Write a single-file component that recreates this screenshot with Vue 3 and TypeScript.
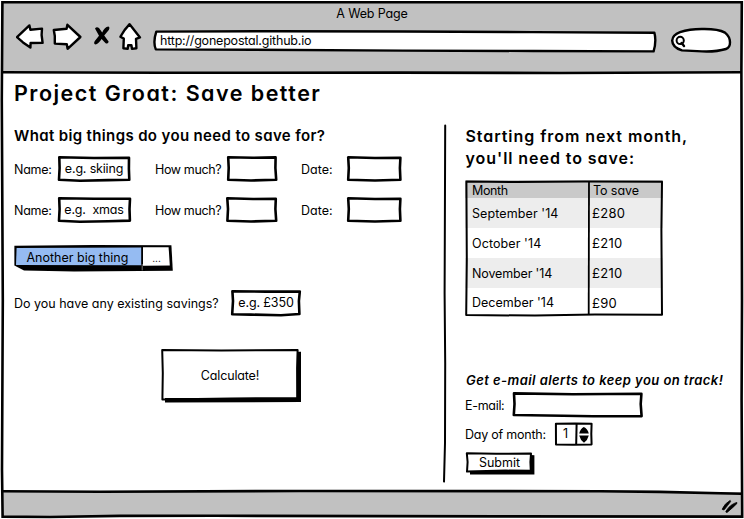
<script setup lang="ts">
interface Goal {
  placeholder: string
  nameShape: string
  amountShape: string
}

interface Saving {
  month: string
  amount: string
  tone: string
}

const goals: Goal[] = [
  {
    placeholder: 'e.g. skiing',
    nameShape: 'M1.3 1.3 L36 2 L71 1.7 L70.9 13 L71.3 23.8 L50 24.1 L22 24.7 L1 23.8 L1.6 12 Z',
    amountShape: 'M1.2 1.3 L26 1.8 L48.6 1.4 L48.4 12 L49.2 23.8 L24 24.5 L1.2 23.7 L1.7 12 Z',
  },
  {
    placeholder: 'e.g.  xmas',
    nameShape: 'M1.2 1.3 L36 1.8 L72 1.8 L71.5 12 L71.9 23.6 L50 24.2 L22 24.7 L1 23.8 L1.6 12 Z',
    amountShape: 'M0.3 1.3 L26 2 L48.8 1.8 L48.4 12 L49.2 23.8 L24 24.5 L0.4 23.7 L1 12 Z',
  },
]

const savings: Saving[] = [
  { month: "September '14", amount: '£280', tone: 'wide' },
  { month: "October '14", amount: '£210', tone: 'wide' },
  { month: "November '14", amount: '£210', tone: 'snug' },
  { month: "December '14", amount: '£90', tone: 'open' },
]
</script>

<template>
  <div class="browser">
    <header class="chrome">
      <div class="page-title">A Web Page</div>
      <div class="toolbar">
        <svg class="nav" width="126" height="30" viewBox="0 0 126 30">
          <path class="icon" d="M1 15.2 L13.4 3.4 L14.4 7.8 L26 6.6 L25.6 13 L26.6 20.8 L14.6 21 L14.4 25.6 L7 20.4 Z" />
          <path class="icon" d="M37.8 8 L50.6 6.8 L51.4 2.8 L64.4 15 L51.6 26.8 L50.8 22.2 L38.8 21.6 L38.8 14 Z" />
          <path class="cross" d="M79 6.6 Q80.6 4 83 6 L86.2 10.6 Q88.6 5 92.4 4.6 Q94.2 5.4 92.8 8 L88.2 13.6 L92.6 19.4 Q92.4 22.4 89.6 21.2 L85.6 17 Q82.6 21.8 79.4 22.6 Q77.2 21.6 78.8 19 L83 13.8 Z" />
          <path class="icon" d="M113.6 2.2 Q108 8 104.4 14.8 L107.8 16.6 L107.4 26.2 L111.7 26.9 L112.2 23.2 L115.4 23.2 L116 26.9 L120.4 26.2 L120 16.8 L124 15.4 Z" />
        </svg>
        <div class="address">
          <svg class="outline" viewBox="0 0 504 24">
            <path class="fill" d="M3.3 2.6 L120 2.2 L250 2.5 L380 3.1 L501.4 3.8 Q503.6 12 500.6 22.4 L380 22 L250 21.6 L100 20.8 L2.8 20.4 Q-0.2 13 3.3 2.6 Z" />
          </svg>
          <span class="url">http://gonepostal.github.io</span>
        </div>
        <svg class="search" width="62" height="28" viewBox="0 0 62 28">
          <path class="icon" d="M10 5.2 Q20 1.8 33 2 Q48 1.8 55 5.6 Q60 9.6 60 15.6 Q60 20.8 56 22 Q46 25 32 24.4 L12 23.4 Q2.4 20.4 2.2 13.6 Q2.6 8 10 5.2 Z" />
          <circle class="lens" cx="10.2" cy="13.4" r="3.6" />
          <path class="handle" d="M11.6 16 L14 19" />
        </svg>
      </div>
    </header>

    <main class="page">
      <h1>Project Groat: Save better</h1>
      <div class="columns">
        <section class="planner">
          <h2>What big things do you need to save for?</h2>
          <div v-for="goal in goals" :key="goal.placeholder" class="goal">
            <span class="label name-label">Name:</span>
            <div class="field name-field">
              <svg class="outline" viewBox="0 0 73 26"><path :d="goal.nameShape" /></svg>
              <span class="value">{{ goal.placeholder }}</span>
            </div>
            <span class="label amount-label">How much?</span>
            <div class="field amount-field">
              <svg class="outline" viewBox="0 0 51 26"><path :d="goal.amountShape" /></svg>
            </div>
            <span class="label date-label">Date:</span>
            <div class="field">
              <svg class="outline" viewBox="0 0 56 26">
                <path d="M1.2 1.3 L28 2 L53.4 1.7 L52.9 12 L53.4 23.8 L28 24.5 L1.2 23.7 L1.8 12 Z" />
              </svg>
            </div>
          </div>

          <div class="split">
            <svg class="outline" viewBox="0 0 160 28">
              <path class="solid" d="M0.4 0.8 L80 0 L157.4 0.2 L158.8 25.8 L60 26.4 L10 25.6 L0.4 20.6 Z" />
              <path class="blue" d="M2.6 3 L127.2 2.4 L127.2 20.2 L2 20 Z" />
              <path class="white" d="M129 2.2 L154.6 2.2 L155.8 20.4 L129 20.8 Z" />
              <path class="hair" d="M128.2 19 V25.4" />
            </svg>
            <span class="split-label">Another big thing</span>
            <span class="split-more">...</span>
          </div>

          <div class="existing">
            <span class="label existing-label">Do you have any existing savings?</span>
            <div class="field">
              <svg class="outline" viewBox="0 0 71 28">
                <path d="M1.4 2.2 L35 2.6 L68.8 2.6 L67.9 12 L68.4 25 L50 26.2 L20 25.6 L1.2 25.2 L2 12 Z" />
              </svg>
              <span class="value pounds">e.g. £350</span>
            </div>
          </div>

          <div class="calculate">
            <svg class="outline" viewBox="0 0 141 55">
              <path class="solid" d="M4 50 L136 50 L136 3.8 L140 3.8 L140 54 L4 54.4 Z" />
              <path class="thin" d="M1.2 2 L60 2.5 L136.6 2 L136.1 20 L136.2 50 L70 50.4 L1.4 51.4 L1.8 25 Z" />
            </svg>
            <span>Calculate!</span>
          </div>
        </section>

        <svg class="divider" width="6" height="360" viewBox="0 0 6 360">
          <path d="M3.2 2.4 L2.8 120 L2.6 170 L3.2 240 L3 320 L2 358.6" />
        </svg>

        <aside class="summary">
          <h2 class="large">Starting from next month, you'll need to save:</h2>
          <div class="table">
            <div class="row head">
              <span class="month">Month</span>
              <span class="save">To save</span>
            </div>
            <div v-for="item in savings" :key="item.month" class="row">
              <span :class="item.tone">{{ item.month }}</span>
              <span class="amount">{{ item.amount }}</span>
            </div>
            <svg class="outline" viewBox="0 0 198 137">
              <path class="thin" d="M1.4 1.6 L50 2 L120 1.4 L197 1.8 L196.4 50 L197 134.8 L130 134.6 L70 135.6 L1.2 135 L1.8 80 Z" />
              <path class="rule" d="M124 2 L123.7 134" />
            </svg>
          </div>

          <p class="pitch">Get e-mail alerts to keep you on track!</p>
          <div class="email">
            <span class="label email-label">E-mail:</span>
            <div class="field">
              <svg class="outline" viewBox="0 0 131 26">
                <path d="M1 1.4 L60 2.2 L128.4 1.8 L127.7 12 L128.6 24.2 L80 24.2 L50 23.8 L0.8 23 L1.5 12 Z" />
              </svg>
            </div>
          </div>
          <div class="day">
            <span class="label day-label">Day of month:</span>
            <div class="stepper">
              <svg class="outline" viewBox="0 0 38 24">
                <path class="thin" d="M0.9 1.8 L20 1.5 L36.6 1.8 L36.3 12 L36.6 22.4 L18 22.8 L1 22.5 Z" />
                <path class="thin" d="M21.6 2 L21.2 22" />
                <path class="solid" d="M28.8 5 Q32.6 6.8 33.8 11.4 H24.2 Q25.4 6.8 28.8 5 Z M24.2 13.4 H33.8 Q32.6 18.2 29 20.8 Q25.4 18.2 24.2 13.4 Z" />
              </svg>
              <span>1</span>
            </div>
          </div>
          <div class="submit">
            <svg class="outline" viewBox="0 0 70 24">
              <path class="solid" d="M4 19 L65 19 L65 3 L68.4 3.2 L68.4 22.4 L4 22.6 Z" />
              <path class="thin" d="M0.8 1.2 L30 1.7 L65 1.6 L64.4 10 L64.8 18.8 L40 18.6 L1 19.6 L1.6 10 Z" />
            </svg>
            <span>Submit</span>
          </div>
        </aside>
      </div>
    </main>

    <footer class="status">
      <svg width="18" height="16" viewBox="0 0 18 16">
        <path class="grip" d="M1.2 10.2 Q3.6 4.4 9.2 1.4 L9.6 2.6 Q6.8 6.2 3.4 10.6 Q1.6 11.4 1.2 10.2 Z M4.8 12.6 Q8.8 5.4 15.8 3.4 L16 4.4 Q12.4 8.2 6.4 13.2 Q4.8 13.8 4.8 12.6 Z" />
      </svg>
    </footer>

    <svg class="frame" viewBox="0 0 744 519">
      <path d="M2.4 2.2 L741.8 2.2 L741.4 70 L742 300 L741.6 400 L742.2 516.6 L500 516.4 L215 515.8 L120 515.9 L50 517 L2.6 516.6 L2 470 L2.8 300 L1.8 100 Z" />
      <path d="M3 72.3 L160 72.8 L400 72.6 L560 73 L741 72.3" />
      <path d="M3 491.2 L100 491.7 L300 491 L600 491.2 L660 491.9 L741 493.8" />
    </svg>
  </div>
</template>

<style>
body {
  margin: 0;
  background: #fff;
}
</style>

<style scoped>
.browser {
  position: relative;
  display: flex;
  flex-direction: column;
  width: 744px;
  height: 519px;
  box-sizing: border-box;
  padding: 2px;
  overflow: hidden;
  background: #fff;
  color: #000;
  font-family: Inter, "Noto Sans", sans-serif;
  font-feature-settings: "cv11";
  font-size: 12.5px;
  line-height: 16px;
}

span,
.page-title {
  white-space: pre;
}

svg {
  display: block;
  flex: none;
}

.frame {
  position: absolute;
  left: 0;
  top: 0;
  width: 744px;
  height: 519px;
  pointer-events: none;
}

.frame path {
  fill: none;
  stroke: #000;
  stroke-width: 2.6;
}

.chrome {
  height: 71px;
  flex: none;
  background: #c1c1c1;
}

.page-title {
  padding-top: 4px;
  text-align: center;
  letter-spacing: -0.14px;
}

.toolbar {
  display: flex;
  padding-left: 14px;
}

.icon {
  fill: #fff;
  stroke: #000;
  stroke-width: 2.4;
  stroke-linejoin: round;
}

.cross {
  fill: #000;
}

.grip {
  fill: #000;
  stroke: #000;
  stroke-width: 0.8;
  stroke-linejoin: round;
}

.address {
  position: relative;
  width: 504px;
  height: 24px;
  margin: 7px 0 0 11px;
}

.url {
  position: relative;
  display: block;
  padding: 4px 0 0 7px;
  letter-spacing: -0.2px;
}

.search {
  margin: 5px 0 0 13px;
}

.lens {
  fill: none;
  stroke: #000;
  stroke-width: 2;
}

.handle {
  fill: none;
  stroke: #000;
  stroke-width: 2.4;
  stroke-linecap: round;
}

.page {
  flex: 1;
  padding: 6px 0 0 12px;
}

h1,
h2,
p {
  margin: 0;
}

h1 {
  height: 28px;
  font-size: 21.5px;
  line-height: 28px;
  font-weight: 600;
  letter-spacing: 1.48px;
}

.columns {
  display: flex;
  margin-top: 16px;
}

.planner {
  width: 428px;
  padding-top: 2px;
}

h2 {
  font-size: 15px;
  line-height: 22px;
  letter-spacing: 0.36px;
  font-weight: 600;
}

.large {
  width: 250px;
  padding-left: 0.5px;
  font-size: 16px;
  letter-spacing: 0.94px;
}

.label {
  padding-top: 2px;
}

.goal {
  display: grid;
  grid-template-columns: 44px 97px 72px 74px 46px 56px;
  align-items: center;
  height: 26px;
  margin-top: 15px;
}

.planner h2 + .goal {
  margin-top: 9px;
}

.field {
  position: relative;
  display: flex;
  align-items: center;
  justify-content: center;
  height: 26px;
}

.name-field {
  width: 73px;
}

.amount-field {
  width: 51px;
}

.outline {
  position: absolute;
  left: 0;
  top: 0;
  width: 100%;
  height: 100%;
  overflow: visible;
}

.outline path {
  fill: none;
  stroke: #000;
  stroke-width: 2.6;
  stroke-linejoin: round;
}

.outline .fill {
  fill: #fff;
  stroke-width: 2.4;
}

.outline .thin {
  stroke-width: 2;
}

.outline .rule {
  stroke-width: 1.8;
}

.outline .solid {
  fill: #000;
  stroke: none;
}

.outline .blue {
  fill: #95bbf2;
  stroke: none;
}

.outline .white {
  fill: #fff;
  stroke: none;
}

.outline .hair {
  stroke: #777;
  stroke-width: 1;
}

.value {
  position: relative;
  padding-right: 1px;
  letter-spacing: -0.18px;
}

.name-label {
  letter-spacing: -0.25px;
}

.amount-label {
  letter-spacing: -0.36px;
}

.date-label {
  letter-spacing: 0;
}

.split {
  position: relative;
  display: flex;
  width: 160px;
  height: 28px;
  margin-top: 22px;
}

.split-label {
  position: relative;
  width: 126px;
  padding: 5px 0 0 12.5px;
  box-sizing: border-box;
}

.split-more {
  position: relative;
  width: 33px;
  padding-top: 5px;
  text-align: center;
  font-size: 10px;
}

.existing {
  display: flex;
  align-items: center;
  margin-top: 16px;
  height: 28px;
}

.existing .field {
  width: 71px;
  height: 28px;
}

.existing-label {
  width: 217px;
}

.pounds {
  letter-spacing: -0.12px;
}

.calculate {
  position: relative;
  display: flex;
  align-items: center;
  justify-content: center;
  width: 141px;
  height: 55px;
  box-sizing: border-box;
  padding: 0 4px 0 1px;
  margin: 31px 0 0 147px;
  letter-spacing: -0.14px;
}

.calculate span,
.submit span {
  position: relative;
}

.divider path {
  fill: none;
  stroke: #000;
  stroke-width: 2;
  stroke-linecap: round;
}

.summary {
  padding: 2px 0 0 17px;
}

.table {
  position: relative;
  width: 198px;
  height: 137px;
  margin-top: 11px;
}

.row {
  display: grid;
  grid-template-columns: 120px 1fr;
  align-items: center;
  height: 30px;
  box-sizing: border-box;
  padding: 1px 3px 0 7px;
  background: #fff;
}

.row:nth-child(even) {
  background: #ededed;
}

.row:nth-child(5) {
  height: 29px;
}

.row.head {
  height: 18px;
  padding-top: 0;
  background: #c9c9c9;
}

.row.head span {
  padding-top: 3px;
}

.row .save {
  padding-left: 1px;
}

.month {
  letter-spacing: -0.35px;
}

.save {
  letter-spacing: -0.08px;
}

.wide {
  letter-spacing: 0.1px;
}

.snug {
  letter-spacing: -0.14px;
}

.open {
  letter-spacing: 0.02px;
}

.amount {
  padding-bottom: 1px;
  font-size: 13px;
  letter-spacing: 0.3px;
}

.pitch {
  width: 270px;
  margin-top: 55px;
  padding-left: 1px;
  font-size: 13px;
  line-height: 16px;
  font-style: italic;
  font-weight: 600;
  letter-spacing: 0.44px;
  white-space: nowrap;
}

.email {
  display: flex;
  align-items: center;
  height: 26px;
  margin-top: 4px;
}

.email-label {
  width: 48px;
  letter-spacing: -0.3px;
}

.email .field {
  width: 131px;
}

.day {
  display: flex;
  align-items: center;
  height: 24px;
  margin-top: 4px;
}

.day-label {
  width: 90px;
  letter-spacing: -0.22px;
}

.stepper {
  position: relative;
  display: flex;
  align-items: center;
  width: 38px;
  height: 24px;
}

.stepper span {
  position: relative;
  padding-left: 8px;
}

.submit {
  position: relative;
  display: flex;
  justify-content: center;
  width: 70px;
  height: 24px;
  margin: 6px 0 0 1px;
  box-sizing: border-box;
  padding: 3px 3px 0 0;
  letter-spacing: 0;
}

.status {
  display: flex;
  justify-content: flex-end;
  height: 25px;
  flex: none;
  box-sizing: border-box;
  padding: 7px 3px 0 0;
  background: #c1c1c1;
}
</style>
